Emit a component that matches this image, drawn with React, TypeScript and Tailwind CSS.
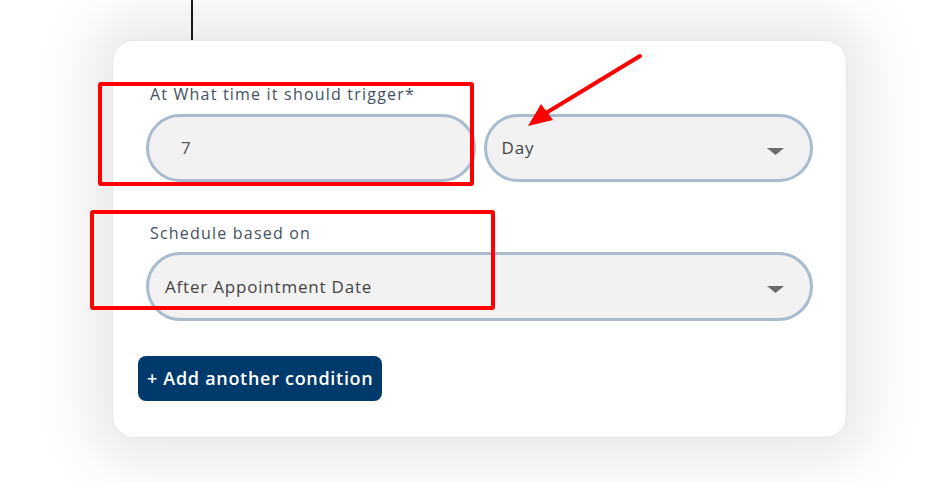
import React from 'react';

const font = { fontFamily: '"Open Sans", "Noto Sans", sans-serif' };

const Caret: React.FC = () => (
  <svg width="17" height="7" viewBox="0 0 17 7" className="shrink-0">
    <path d="M0 0 H17 L8.5 7 Z" fill="#6b6b6b" />
  </svg>
);

const Annotations: React.FC = () => (
  <svg className="pointer-events-none absolute inset-0" width="941" height="482">
    <rect x="100" y="84" width="372" height="100" fill="none" stroke="#ff0000" strokeWidth="4" rx="1" />
    <rect x="92" y="212" width="401" height="96" fill="none" stroke="#ff0000" strokeWidth="4" rx="1" />
    <line x1="640" y1="56" x2="546" y2="113" stroke="#ff0000" strokeWidth="4" strokeLinecap="round" />
    <path d="M528 126 L541 104 L553 120 Z" fill="#ff0000" />
  </svg>
);

export default function App() {
  return (
    <div className="relative h-[482px] w-[941px] overflow-hidden bg-white" style={font}>
      <div className="ml-[191px] h-[40px] w-[2px] bg-[#1a1a1a]" />
      <div className="ml-[112px] w-[735px] rounded-[22px] border border-[#e8e8e8] bg-white px-[33px] pb-[36px] pt-[43px] shadow-[0_0_55px_26px_rgba(0,0,0,0.085)]">
        <label className="block pl-[4px] text-[16px] leading-[20px] tracking-[1.2px] text-[#3f5163]">
          At What time it should trigger*
        </label>
        <div className="mt-[10px] grid grid-cols-2 gap-[8px]">
          <div className="flex h-[68px] items-center rounded-full border-[3px] border-[#a8bbcf] bg-[#f2f2f2] pl-[32px] text-[17px] text-[#555]">
            7
          </div>
          <div className="flex h-[68px] items-center justify-between rounded-full border-[3px] border-[#a8bbcf] bg-[#f2f2f2] pl-[15px] pr-[26px] text-[17px] tracking-[0.8px] text-[#444]">
            <span>Day</span>
            <span className="mt-[6px]"><Caret /></span>
          </div>
        </div>
        <label className="mt-[41px] block pl-[4px] text-[16px] leading-[20px] tracking-[1.2px] text-[#3f5163]">
          Schedule based on
        </label>
        <div className="mt-[9px] flex h-[69px] items-center justify-between rounded-full border-[3px] border-[#a8bbcf] bg-[#f2f2f2] pl-[16px] pr-[26px] text-[17px] tracking-[0.8px] text-[#444]">
          <span>After Appointment Date</span>
          <span className="mt-[6px]"><Caret /></span>
        </div>
        <button className="ml-[-8px] mt-[35px] flex h-[45px] items-center rounded-[8px] bg-[#003a6c] px-[9px] text-[18px] font-semibold tracking-[0.7px] text-white">
          + Add another condition
        </button>
      </div>
      <Annotations />
    </div>
  );
}
